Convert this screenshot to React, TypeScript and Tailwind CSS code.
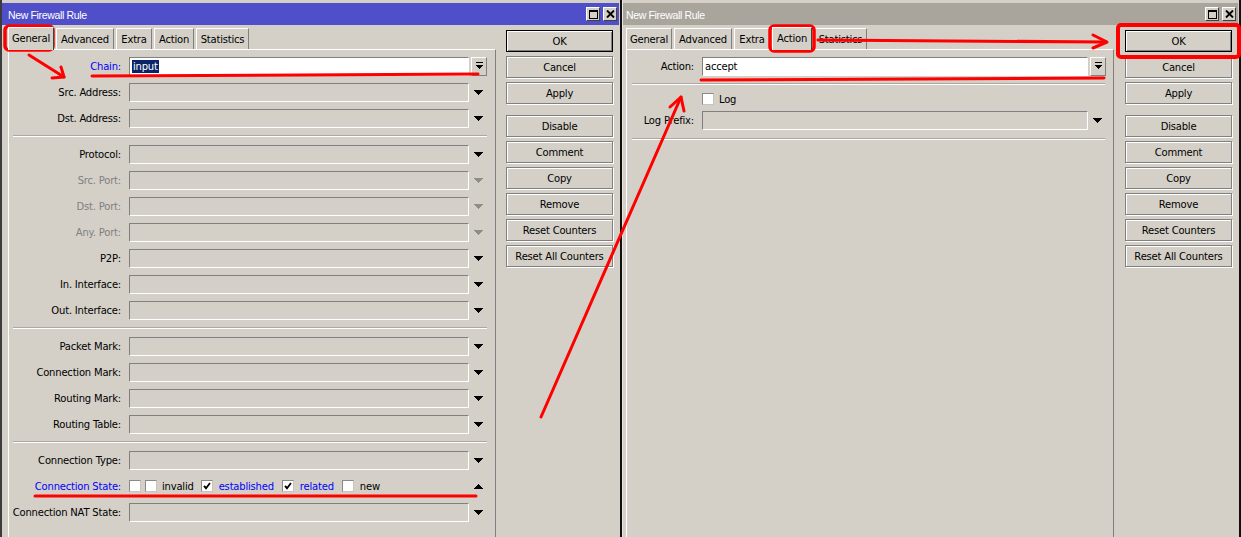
import React from "react";

function Down({ disabled = false }: { disabled?: boolean }) {
  return (
    <svg width="9" height="5" viewBox="0 0 9 5" shapeRendering="crispEdges">
      <polygon points="0,0 9,0 4.5,5" fill={disabled ? "#8e8e86" : "#000"} />
    </svg>
  );
}

function Up() {
  return (
    <svg width="9" height="5" viewBox="0 0 9 5" shapeRendering="crispEdges">
      <polygon points="0,5 9,5 4.5,0" fill="#000" />
    </svg>
  );
}

function ComboBtn() {
  return (
    <div className="w-[16px] h-[19px] ml-[2px] border border-[#808080] border-t-white border-l-white flex items-center justify-center">
      <svg width="9" height="8" viewBox="0 0 9 8" shapeRendering="crispEdges">
        <rect x="1" y="0" width="7" height="1" fill="#000" />
        <polygon points="0.5,3 8.5,3 4.5,7.5" fill="#000" />
      </svg>
    </div>
  );
}

function Check({ checked = false }: { checked?: boolean }) {
  return (
    <div className="w-[12px] h-[12px] bg-white border border-[#8a8a8a] border-b-[#c8c4bc] border-r-[#c8c4bc] flex items-center justify-center shrink-0">
      {checked && (
        <svg width="8" height="8" viewBox="0 0 8 8">
          <polyline points="1,3.8 3,6.2 7,1" fill="none" stroke="#000" strokeWidth="1.8" />
        </svg>
      )}
    </div>
  );
}

function Divider() {
  return <div className="ml-[4px] mr-[8px] my-[4px] h-[2px] border-t border-t-[#aca89f] border-b border-b-white" />;
}

type RowDef = {
  label: string;
  kind?: "blue" | "disabled";
  custom?: "chain" | "state";
  arrow?: "down" | "dis" | "up" | "combo";
};

function LeftRow({ r }: { r: RowDef }) {
  const labelCls =
    r.kind === "blue"
      ? "w-[112px] text-right text-[#0000ff] whitespace-nowrap"
      : r.kind === "disabled"
      ? "w-[112px] text-right text-[#808080] whitespace-nowrap"
      : "w-[112px] text-right text-black whitespace-nowrap";
  let field: React.ReactNode;
  if (r.custom === "chain") {
    field = (
      <div className="w-[340px] h-[19px] bg-white border border-white border-t-[#808080] border-l-[#808080] flex items-center pl-[2px]">
        <span className="bg-[#0a246a] text-white leading-[13px] px-[1px]">input</span>
      </div>
    );
  } else if (r.custom === "state") {
    field = (
      <div className="w-[340px] h-[19px] flex items-center">
        <Check />
        <div className="ml-[4px]">
          <Check />
        </div>
        <span className="ml-[5px]">invalid</span>
        <div className="ml-[7px]">
          <Check checked />
        </div>
        <span className="ml-[6px] text-[#0000ff]">established</span>
        <div className="ml-[8px]">
          <Check checked />
        </div>
        <span className="ml-[6px] text-[#0000ff]">related</span>
        <div className="ml-[8px]">
          <Check />
        </div>
        <span className="ml-[6px]">new</span>
      </div>
    );
  } else {
    field = <div className="w-[340px] h-[19px] border border-white border-t-[#808080] border-l-[#808080]" />;
  }
  let arrow: React.ReactNode = null;
  if (r.arrow === "combo") arrow = <ComboBtn />;
  else if (r.arrow === "dis") arrow = <Down disabled />;
  else if (r.arrow === "up") arrow = <Up />;
  else arrow = <Down />;
  return (
    <div className="flex items-center h-[26px]">
      <div className={labelCls}>{r.label}</div>
      <div className="ml-[8px]">{field}</div>
      <div className="w-[18px] flex justify-center">{arrow}</div>
    </div>
  );
}

const groups: RowDef[][] = [
  [
    { label: "Chain:", kind: "blue", custom: "chain", arrow: "combo" },
    { label: "Src. Address:" },
    { label: "Dst. Address:" },
  ],
  [
    { label: "Protocol:" },
    { label: "Src. Port:", kind: "disabled", arrow: "dis" },
    { label: "Dst. Port:", kind: "disabled", arrow: "dis" },
    { label: "Any. Port:", kind: "disabled", arrow: "dis" },
    { label: "P2P:" },
    { label: "In. Interface:" },
    { label: "Out. Interface:" },
  ],
  [
    { label: "Packet Mark:" },
    { label: "Connection Mark:" },
    { label: "Routing Mark:" },
    { label: "Routing Table:" },
  ],
  [
    { label: "Connection Type:" },
    { label: "Connection State:", kind: "blue", custom: "state", arrow: "up" },
    { label: "Connection NAT State:" },
  ],
];

function WinButtons() {
  return (
    <div className="flex gap-[3px]">
      <div className="w-[14px] h-[14px] bg-[#d4d0c8] border border-[#404040] border-t-white border-l-white flex items-center justify-center">
        <svg width="9" height="9" viewBox="0 0 9 9" shapeRendering="crispEdges">
          <rect x="0.5" y="0.5" width="8" height="8" fill="none" stroke="#000" />
          <rect x="0" y="0" width="9" height="2" fill="#000" />
        </svg>
      </div>
      <div className="w-[14px] h-[14px] bg-[#d4d0c8] border border-[#404040] border-t-white border-l-white flex items-center justify-center">
        <svg width="9" height="8" viewBox="0 0 9 8">
          <path d="M1,0.5 L8,7.5 M8,0.5 L1,7.5" stroke="#000" strokeWidth="1.9" />
        </svg>
      </div>
    </div>
  );
}

function Tabs({ active }: { active: string }) {
  const tabs: [string, string][] = [
    ["General", "w-[46px]"],
    ["Advanced", "w-[58px]"],
    ["Extra", "w-[36px]"],
    ["Action", "w-[40px]"],
    ["Statistics", "w-[53px]"],
  ];
  return (
    <div className="flex items-end gap-[2px] h-[22px] mt-[2px]">
      {tabs.map(([t, w]) =>
        t === active ? (
          <div
            key={t}
            className={`${w} h-[23px] relative top-[1px] z-10 bg-[#d4d0c8] border-t border-l border-white border-r border-r-[#404040] flex items-center justify-center pb-[2px]`}
          >
            {t}
          </div>
        ) : (
          <div
            key={t}
            className={`${w} h-[21px] border-t border-l border-white border-r border-r-[#808080] flex items-center justify-center`}
          >
            {t}
          </div>
        )
      )}
    </div>
  );
}

function Buttons() {
  const btn =
    "h-[22px] flex items-center justify-center border border-[#808080] shadow-[1px_1px_0_#ffffff,inset_1px_1px_0_#ffffff]";
  return (
    <div className="w-[107px] pt-[5px] flex flex-col gap-[4px] shrink-0">
      <div className="h-[22px] flex items-center justify-center border border-black shadow-[inset_1px_1px_0_#ffffff,inset_-1px_-1px_0_#808080]">
        OK
      </div>
      <div className={btn}>Cancel</div>
      <div className={btn}>Apply</div>
      <div className={`${btn} mt-[7px]`}>Disable</div>
      <div className={btn}>Comment</div>
      <div className={btn}>Copy</div>
      <div className={btn}>Remove</div>
      <div className={btn}>Reset Counters</div>
      <div className={btn}>Reset All Counters</div>
    </div>
  );
}

function LeftWindow() {
  return (
    <div className="w-[622px] h-full shrink-0 flex flex-col border-l-2 border-l-[#3c3c3c] border-r-2 border-r-[#101010] pt-[3px]">
      <div className="h-[22px] mr-[1px] bg-[#4f50c9] flex items-center justify-between pl-[6px] pr-[2px]">
        <span className="text-white font-['Liberation_Sans',sans-serif] text-[10.5px] tracking-[-0.35px] pt-[3px]">New Firewall Rule</span>
        <WinButtons />
      </div>
      <div className="flex flex-1">
        <div className="ml-[6px] w-[488px] flex flex-col">
          <Tabs active="General" />
          <div className="flex-1 border-t border-l border-white border-r border-r-[#808080] pt-[3px]">
            {groups.map((g, gi) => (
              <div key={gi}>
                {gi > 0 && <Divider />}
                {g.map((r) => (
                  <LeftRow key={r.label} r={r} />
                ))}
              </div>
            ))}
          </div>
        </div>
        <div className="ml-[10px]">
          <Buttons />
        </div>
      </div>
    </div>
  );
}

function RightWindow() {
  return (
    <div className="w-[619px] h-full shrink-0 flex flex-col border-l border-l-[#e8e6e0] border-r-2 border-r-[#101010] pt-[3px]">
      <div className="h-[22px] mr-[1px] bg-[#a9a59d] flex items-center justify-between pl-[3px] pr-[2px]">
        <span className="text-white font-['Liberation_Sans',sans-serif] text-[10.5px] tracking-[-0.35px] pt-[3px]">New Firewall Rule</span>
        <WinButtons />
      </div>
      <div className="flex flex-1">
        <div className="ml-[3px] w-[488px] flex flex-col">
          <Tabs active="Action" />
          <div className="flex-1 border-t border-l border-white border-r border-r-[#808080] pt-[3px]">
            <div className="flex items-center h-[26px]">
              <div className="w-[67px] text-right">Action:</div>
              <div className="ml-[8px] w-[386px] h-[19px] bg-white border border-white border-t-[#808080] border-l-[#808080] flex items-center pl-[2px]">
                accept
              </div>
              <div className="w-[18px] flex justify-center">
                <ComboBtn />
              </div>
            </div>
            <div className="ml-[5px] mr-[8px] my-[4px] h-[2px] border-t border-t-[#aca89f] border-b border-b-white" />
            <div className="flex items-center h-[20px]">
              <div className="w-[75px]" />
              <Check />
              <span className="ml-[5px]">Log</span>
            </div>
            <div className="flex items-center h-[22px]">
              <div className="w-[67px] text-right whitespace-nowrap">Log Prefix:</div>
              <div className="ml-[8px] w-[386px] h-[19px] border border-white border-t-[#808080] border-l-[#808080]" />
              <div className="w-[18px] flex justify-center">
                <Down />
              </div>
            </div>
            <div className="ml-[5px] mr-[8px] mt-[7px] h-[2px] border-t border-t-[#aca89f] border-b border-b-white" />
          </div>
        </div>
        <div className="ml-[11px]">
          <Buttons />
        </div>
      </div>
    </div>
  );
}

function Annotations() {
  return (
    <svg className="absolute inset-0 pointer-events-none" width="1241" height="537" viewBox="0 0 1241 537">
      <g stroke="#ff0000" strokeWidth="3" fill="none" strokeLinecap="round" strokeLinejoin="round">
        <rect x="5" y="26" width="48" height="24" rx="4" strokeWidth="3.5" />
        <line x1="29" y1="55" x2="64" y2="77" />
        <polyline points="52,78 64,77 61,67" />
        <path d="M92,76 L300,75 L478,74" />
        <path d="M35,496 L476,496" />
        <rect x="770" y="26" width="44" height="25" rx="4" strokeWidth="3.5" />
        <path d="M818,40 L1106,42" />
        <polyline points="1093,35 1107,42 1093,48" />
        <rect x="1118" y="25" width="121" height="32" rx="3" strokeWidth="4" />
        <path d="M701,80 L1104,78" />
        <path d="M541,417 L681,97" />
        <polyline points="670,107 681,97 684,111" />
      </g>
    </svg>
  );
}

export default function App() {
  return (
    <div className="relative w-[1241px] h-[537px] overflow-hidden bg-[#d4d0c8] flex text-[10px] tracking-[-0.2px] text-black font-['DejaVu_Sans',sans-serif]">
      <LeftWindow />
      <RightWindow />
      <Annotations />
    </div>
  );
}
